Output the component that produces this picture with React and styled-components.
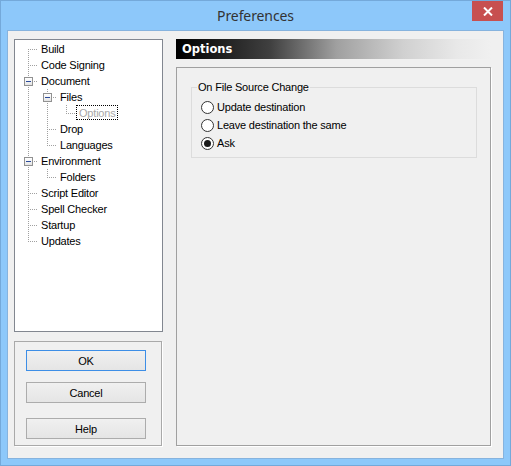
import React from "react";
import styled, { createGlobalStyle } from "styled-components";

const GlobalStyle = createGlobalStyle`
  html, body {
    margin: 0;
    padding: 0;
    background: #8dc8fa;
  }
`;

const dotsDown = "repeating-linear-gradient(to bottom, #a0a0a0 0 1px, transparent 1px 2px)";
const dotsRight = "repeating-linear-gradient(to right, #a0a0a0 0 1px, transparent 1px 2px)";

const Window = styled.div`
  width: 511px;
  height: 466px;
  box-sizing: border-box;
  border: 1px solid #74a9da;
  background: #8dc8fa;
  padding: 0 7px 7px;
  display: flex;
  flex-direction: column;
  font-family: "Liberation Sans", Arial, sans-serif;
  font-size: 11px;
  letter-spacing: -0.2px;
  color: #000;
`;

const TitleBar = styled.div`
  height: 30px;
  display: grid;
  grid-template-columns: 1fr auto 1fr;
  margin: 0 -7px;
`;

const Title = styled.div`
  grid-column: 2;
  font-family: "Noto Sans", "Open Sans", sans-serif;
  font-size: 14px;
  letter-spacing: -0.1px;
  color: #333;
  line-height: 30px;
`;

const CloseButton = styled.div`
  grid-column: 3;
  justify-self: end;
  align-self: start;
  width: 31px;
  height: 20px;
  margin-right: 7px;
  background: #c75050;
  display: flex;
  align-items: center;
  justify-content: center;
`;

const Client = styled.div`
  flex: 1;
  background: #f0f0f0;
  box-shadow: 0 0 0 1px #86b3de;
  padding: 8px 12px 12px 6px;
  display: flex;
  gap: 13px;
`;

const LeftColumn = styled.div`
  width: 149px;
  display: flex;
  flex-direction: column;
`;

const Tree = styled.div`
  height: 293px;
  box-sizing: border-box;
  border: 1px solid #828790;
  background: #fff;
  padding: 1px 0 0 4px;
`;

const Row = styled.div`
  display: flex;
  height: 16px;
  line-height: 16px;
  white-space: nowrap;
`;

const Cell = styled.span`
  position: relative;
  flex: none;
  width: 19px;
  height: 16px;

  &::before {
    content: "";
    display: ${(p) => (p.$v === "none" ? "none" : "block")};
    position: absolute;
    left: 9px;
    width: 1px;
    top: ${(p) => (p.$v === "bottom" ? "8px" : "0")};
    height: ${(p) => (p.$v === "full" ? "16px" : "8px")};
    background: ${dotsDown};
  }

  &::after {
    content: "";
    display: ${(p) => (p.$h ? "block" : "none")};
    position: absolute;
    left: 9px;
    top: 8px;
    width: 10px;
    height: 1px;
    background: ${dotsRight};
  }
`;

const Expander = styled.span`
  position: absolute;
  z-index: 1;
  left: 5px;
  top: 4px;
  width: 9px;
  height: 9px;
  box-sizing: border-box;
  border: 1px solid #919191;
  background: linear-gradient(#ffffff, #e4e4e4);

  &::before {
    content: "";
    position: absolute;
    left: 1px;
    top: 3px;
    width: 5px;
    height: 1px;
    background: #2a4a9a;
  }
`;

const Label = styled.span`
  align-self: flex-start;
  height: 15px;
  line-height: 14px;
  box-sizing: border-box;
  padding: 0 1px 0 2px;
  border: 1px ${(p) => (p.$selected ? "dotted #000" : "solid transparent")};
  color: ${(p) => (p.$selected ? "#a8a8a8" : "#000")};
`;

const ButtonBox = styled.div`
  margin-top: 9px;
  width: 148px;
  height: 105px;
  box-sizing: border-box;
  border: 1px solid #a9a9a9;
  box-shadow: 1px 1px 0 #fff;
  padding: 7px 0 0 11px;
  display: flex;
  flex-direction: column;
`;

const Button = styled.button`
  margin-top: ${(p) => p.$top || 0}px;
  width: 120px;
  height: 21px;
  padding: 0;
  box-sizing: border-box;
  border: 1px solid ${(p) => (p.$default ? "#3d8ee6" : "#acacac")};
  background: linear-gradient(#f0f0f0, #e5e5e5);
  font-family: "Liberation Sans", Arial, sans-serif;
  font-size: 11px;
  letter-spacing: -0.2px;
  color: #000;
`;

const RightColumn = styled.div`
  width: 315px;
  display: flex;
  flex-direction: column;
`;

const Header = styled.div`
  height: 20px;
  background: linear-gradient(
    to right,
    #000 0%,
    #404040 30%,
    #a0a0a0 51%,
    #d0d0d0 72%,
    #e8e8e8 89%,
    #f0f0f0 100%
  );
  color: #fff;
  font-family: "DejaVu Sans", Verdana, sans-serif;
  font-weight: bold;
  font-size: 11.5px;
  letter-spacing: 0;
  line-height: 20px;
  padding-left: 6px;
`;

const Panel = styled.div`
  margin-top: 8px;
  flex: 1;
  box-sizing: border-box;
  border: 1px solid #a0a0a0;
  box-shadow: 1px 1px 0 #fff;
  padding: 13px 13px 0 14px;
`;

const Group = styled.fieldset`
  margin: 0;
  padding: 0 0 5px 9px;
  border: 1px solid #dcdcdc;
  min-width: 0;
`;

const Legend = styled.legend`
  margin-left: -4px;
  padding: 0 1px;
  line-height: 13px;
  height: 13px;
`;

const Options = styled.div`
  margin-top: 4px;
  display: flex;
  flex-direction: column;
`;

const RadioRow = styled.label`
  display: flex;
  align-items: center;
  gap: 3px;
  height: 18px;
`;

const RadioCircle = styled.span`
  width: 13px;
  height: 13px;
  box-sizing: border-box;
  border-radius: 50%;
  border: 1px solid #333;
  background: #fff;
  display: flex;
  align-items: center;
  justify-content: center;

  &::after {
    content: "";
    display: ${(p) => (p.$checked ? "block" : "none")};
    width: 7px;
    height: 7px;
    border-radius: 50%;
    background: #1a1a1a;
  }
`;

const treeData = [
  { label: "Build" },
  { label: "Code Signing" },
  {
    label: "Document",
    children: [
      { label: "Files", children: [{ label: "Options", selected: true }] },
      { label: "Drop" },
      { label: "Languages" },
    ],
  },
  { label: "Environment", children: [{ label: "Folders" }] },
  { label: "Script Editor" },
  { label: "Spell Checker" },
  { label: "Startup" },
  { label: "Updates" },
];

const flatten = (nodes, guides = [], depth = 0, out = []) => {
  nodes.forEach((node, i) => {
    const last = i === nodes.length - 1;
    const first = depth === 0 && i === 0;
    out.push({
      ...node,
      guides,
      own: last ? "top" : first ? "bottom" : "full",
    });
    if (node.children) flatten(node.children, [...guides, !last], depth + 1, out);
  });
  return out;
};

const rows = flatten(treeData);

const radios = [
  { label: "Update destination" },
  { label: "Leave destination the same" },
  { label: "Ask", checked: true },
];

const App = () => {
  return (
    <>
      <GlobalStyle />
      <Window>
        <TitleBar>
          <Title>Preferences</Title>
          <CloseButton>
            <svg width="10" height="9" viewBox="0 0 10 9">
              <path d="M1 0.5 L9 8.5 M9 0.5 L1 8.5" stroke="#fff" strokeWidth="2" />
            </svg>
          </CloseButton>
        </TitleBar>
        <Client>
          <LeftColumn>
            <Tree>
              {rows.map((row) => (
                <Row key={row.label}>
                  {row.guides.map((g, i) => (
                    <Cell key={i} $v={g ? "full" : "none"} />
                  ))}
                  <Cell $v={row.own} $h>
                    {row.children && <Expander />}
                  </Cell>
                  <Label $selected={row.selected}>{row.label}</Label>
                </Row>
              ))}
            </Tree>
            <ButtonBox>
              <Button $default $top={1}>OK</Button>
              <Button $top={11}>Cancel</Button>
              <Button $top={15}>Help</Button>
            </ButtonBox>
          </LeftColumn>
          <RightColumn>
            <Header>Options</Header>
            <Panel>
              <Group>
                <Legend>On File Source Change</Legend>
                <Options>
                  {radios.map((r) => (
                    <RadioRow key={r.label}>
                      <RadioCircle $checked={r.checked} />
                      {r.label}
                    </RadioRow>
                  ))}
                </Options>
              </Group>
            </Panel>
          </RightColumn>
        </Client>
      </Window>
    </>
  );
};

export default App;
